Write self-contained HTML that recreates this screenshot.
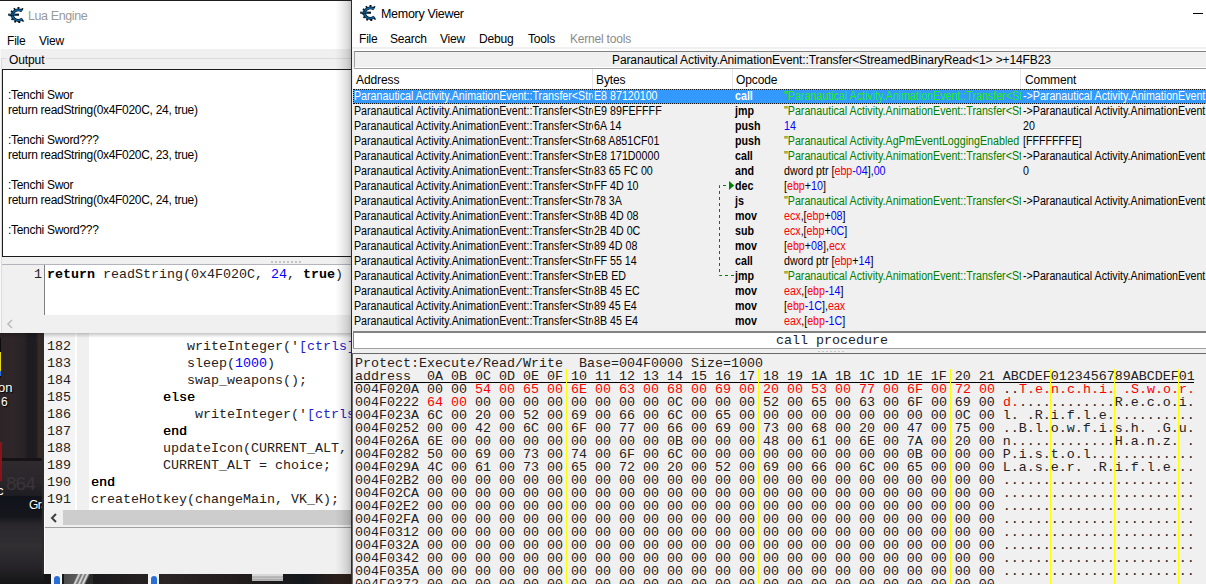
<!DOCTYPE html>
<html><head><meta charset="utf-8"><title>Memory Viewer</title>
<style>
*{box-sizing:border-box;margin:0;padding:0}
html,body{width:1206px;height:584px;overflow:hidden;background:#241d1e}
body{position:relative;font-family:"Liberation Sans",sans-serif;font-size:12px;color:#000}
.a{position:absolute}
.t{position:absolute;white-space:pre;line-height:15px}
.ui{font-family:"Liberation Sans",sans-serif;font-size:12px}
.mono{font-family:"Liberation Mono",monospace;font-size:13.333px;white-space:pre;position:absolute;line-height:13px}
.dis{position:absolute;white-space:pre;font-family:"Liberation Sans",sans-serif;font-size:12px;line-height:15px;height:15px;transform-origin:0 0;transform:scaleX(.89)}
.b{font-weight:bold}
.r{color:#f00}.bl{color:#00f}.g{color:#008000}
</style></head><body>
<div class="a" id="desk" style="left:0;top:330px;width:352px;height:254px;background:#1a191c;overflow:hidden">
<div class="a" style="left:0;top:0;width:44px;height:130px;background:linear-gradient(90deg,#2c2426 0,#2e2628 12px,#2a2325 24px,#1d1b20 28px,#1e1c20 36px,#3a2c28 39px,#2c2220 44px)"></div>
<div class="a" style="left:0;top:128px;width:44px;height:3px;background:#151316"></div>
<div class="a" style="left:0;top:131px;width:44px;height:35px;background:linear-gradient(180deg,#2e2a2e,#2a262a 60%,#1c1c22)"></div>
<div class="a" style="left:0;top:166px;width:44px;height:88px;background:linear-gradient(180deg,#10141a 0,#14161c 20px,#2a282c 30px,#322f33 50px,#262428 70px,#141416 88px)"></div>
<div class="a" style="left:0;top:8px;width:1px;height:40px;background:#0c0c0c"></div>
<div class="a" style="left:0;top:22px;width:1px;height:19px;background:#e6d61e"></div>
<div class="a" style="left:0;top:41px;width:1px;height:5px;background:#2a6fd8"></div>
<div class="a" style="left:0;top:112px;width:2px;height:39px;background:#8a1218"></div>
<div class="t" style="left:-2px;top:50px;color:#fff;font-size:13px;text-shadow:1px 1px 1px #000">on</div>
<div class="t" style="left:1px;top:65px;color:#fff;font-size:12px;text-shadow:1px 1px 1px #000">6</div>
<div class="t" style="left:6px;top:143px;color:#39353a;font-size:19px;line-height:22px;letter-spacing:-1px">864</div>
<div class="t" style="left:-3px;top:153px;color:#fff;font-size:13px">c</div>
<div class="t" style="left:29px;top:168px;color:#fff;font-size:12px;letter-spacing:-.5px;text-shadow:1px 1px 1px #000">Gra</div>
<div class="a" style="left:44px;top:244px;width:308px;height:10px;background:linear-gradient(90deg,#141416 0,#1c1a1c 60px,#2a2424 120px,#221c1c 200px,#14181c 260px,#2e201c 300px,#30221e 308px)"></div>
<div class="a" style="left:51px;top:244px;width:11px;height:10px;background:#f4f4f4"></div>
<div class="a" style="left:54px;top:246px;width:6px;height:8px;background:#2a6fd8;border-radius:3px 3px 0 0"></div>
<div class="a" style="left:64px;top:244px;width:29px;height:10px;background:linear-gradient(115deg,#4a4a4a 0,#585858 40%,#e0e0e0 45%,#6a6a6a 52%,#e0e0e0 58%,#707070 64%,#e8e8e8 70%,#2a2a2a 78%)"></div>
<div class="a" style="left:148px;top:244px;width:11px;height:10px;background:#f4f4f4"></div>
<div class="a" style="left:151px;top:246px;width:6px;height:8px;background:#2a6fd8;border-radius:3px 3px 0 0"></div>
<div class="a" style="left:252px;top:244px;width:31px;height:7px;background:linear-gradient(180deg,#d8d8d8 0,#d8d8d8 2px,#9a9a9a 3px,#d0d0d0 4px,#a0a0a0 6px,#c8c8c8 7px)"></div>
</div>
<div class="a" id="ed2" style="left:42px;top:330px;width:309px;height:244px;background:#fff;border-left:2px solid #2e2a2b">
<div class="a" style="left:0;top:0;width:31px;height:180px;background:#f4f4f4"></div>
<div class="a" style="left:33px;top:0;width:12px;height:180px;background:#f0f0f0"></div>
<div class="a" style="left:0;top:180px;width:310px;height:17px;background:#f0f0f0"></div>
<div class="a" style="left:19px;top:180px;width:291px;height:15px;background:#cdcdcd"></div>
<div class="a" style="left:0;top:197px;width:310px;height:1px;background:#a0a0a0"></div>
<div class="a" style="left:0;top:198px;width:310px;height:46px;background:#f0f0f0"></div>
<div class="a" style="left:0;top:180px;width:1px;height:64px;background:#fff"></div>
</div>
<div class="a" id="ed2t" style="left:44px;top:330px;width:307px;height:180px;overflow:hidden"><div class="mono" style="left:3px;top:10px;color:#222">182</div><div class="mono" style="left:143px;top:10px;color:#222">writeInteger('<span class="bl" style="color:#2222cc">[ctrls]</span></div><div class="mono" style="left:3px;top:27px;color:#222">183</div><div class="mono" style="left:143px;top:27px;color:#222">sleep(<span class="bl">1000</span>)</div><div class="mono" style="left:3px;top:44px;color:#222">184</div><div class="mono" style="left:143px;top:44px;color:#222">swap_weapons();</div><div class="mono" style="left:3px;top:61px;color:#222">185</div><div class="mono" style="left:119px;top:61px;color:#222"><span style="color:#000;text-shadow:.25px 0 0 #000">else</span></div><div class="mono" style="left:3px;top:78px;color:#222">186</div><div class="mono" style="left:151px;top:78px;color:#222">writeInteger('<span class="bl" style="color:#2222cc">[ctrls]</span></div><div class="mono" style="left:3px;top:95px;color:#222">187</div><div class="mono" style="left:119px;top:95px;color:#222"><span style="color:#000;text-shadow:.25px 0 0 #000">end</span></div><div class="mono" style="left:3px;top:112px;color:#222">188</div><div class="mono" style="left:119px;top:112px;color:#222">updateIcon(CURRENT_ALT, choice)</div><div class="mono" style="left:3px;top:129px;color:#222">189</div><div class="mono" style="left:119px;top:129px;color:#222">CURRENT_ALT = choice;</div><div class="mono" style="left:3px;top:146px;color:#222">190</div><div class="mono" style="left:47px;top:146px;color:#222"><span style="color:#000;text-shadow:.25px 0 0 #000">end</span></div><div class="mono" style="left:3px;top:163px;color:#222">191</div><div class="mono" style="left:47px;top:163px;color:#222">createHotkey(changeMain, VK_K);</div></div>
<svg class="a" style="left:50px;top:513px" width="8" height="10" viewBox="0 0 8 10"><path d="M6 1L2 5l4 4" fill="none" stroke="#404040" stroke-width="2"/></svg>
<div class="a" id="luashadow" style="left:0;top:326px;width:351px;height:12px;background:linear-gradient(180deg,rgba(0,0,0,.0) 0,rgba(0,0,0,.28) 6px,rgba(0,0,0,.12) 9px,rgba(0,0,0,0) 12px)"></div>
<div class="a" id="lua" style="left:0;top:0;width:351px;height:333px;background:#f0f0f0;overflow:hidden">
<div class="a" style="left:0;top:0;width:351px;height:49px;background:#fff"></div>
<div class="a" style="left:0;top:0;width:351px;height:1px;background:#1e1e1e"></div>
<div class="a" style="left:0;top:49px;width:1px;height:284px;background:#f8f8f8"></div>
<svg class="a" style="left:8px;top:7px" width="16" height="16" viewBox="0 0 16 16"><path d="M14.9 2.6A7.4 6.9 0 1 0 15.3 13.2" fill="none" stroke="#041624" stroke-width="2.4" stroke-dasharray="1.7 2.1"/><path d="M14 4.1A5.9 5.2 0 1 0 14.4 11.9" fill="none" stroke="#041a2c" stroke-width="3.1"/><path d="M14 4.1A5.9 5.2 0 1 0 14.4 11.9" fill="none" stroke="#0f66a2" stroke-width="1.4"/><path d="M0.2 7.7H11" stroke="#041624" stroke-width="2.1"/><path d="M1 7.7H7" stroke="#0f66a2" stroke-width=".9"/></svg><div class="t" style="left:28px;top:9px;color:#999;letter-spacing:-.4px;font-size:12.5px">Lua Engine</div>
<div class="t" style="left:7px;top:34px;letter-spacing:-.2px">File</div>
<div class="t" style="left:39px;top:34px;letter-spacing:-.2px">View</div>
<div class="a" style="left:1px;top:58px;width:350px;height:1px;background:#dcdcdc"></div>
<div class="a" style="left:1px;top:58px;width:1px;height:275px;background:#dcdcdc"></div>
<div class="t" style="left:7px;top:53px;background:#f0f0f0;padding:0 2px;letter-spacing:-.1px">Output</div>
<div class="a" id="outbox" style="left:2px;top:69px;width:352px;height:188px;background:#fff;border:1px solid #1c1c1c"></div>
<div class="t" style="left:8px;top:88px;letter-spacing:-.3px">:Tenchi Swor</div><div class="t" style="left:8px;top:103px;letter-spacing:-.3px">return readString(0x4F020C, 24, true)</div><div class="t" style="left:8px;top:133px;letter-spacing:-.3px">:Tenchi Sword???</div><div class="t" style="left:8px;top:148px;letter-spacing:-.3px">return readString(0x4F020C, 23, true)</div><div class="t" style="left:8px;top:178px;letter-spacing:-.3px">:Tenchi Swor</div><div class="t" style="left:8px;top:193px;letter-spacing:-.3px">return readString(0x4F020C, 24, true)</div><div class="t" style="left:8px;top:223px;letter-spacing:-.3px">:Tenchi Sword???</div><div class="a" style="left:271px;top:261px;width:30px;height:2px;background:repeating-linear-gradient(90deg,#c4c4c4 0,#c4c4c4 2px,transparent 2px,transparent 4px)"></div>
<div class="a" style="left:2px;top:264px;width:349px;height:1px;background:#b4b4bc"></div>
<div class="a" style="left:2px;top:265px;width:349px;height:50px;background:#fff"></div>
<div class="a" style="left:2px;top:265px;width:42px;height:50px;background:#f0f0f0"></div>
<div class="a" style="left:44px;top:265px;width:1px;height:50px;background:#808080"></div>
<div class="mono" style="left:34px;top:268px;color:#222">1</div>
<div class="mono" style="left:47px;top:268px;color:#222"><b style="color:#000">return</b> readString(0x4F020C, <span class="bl">24</span>, <b style="color:#000">true</b>)</div>
<svg class="a" style="left:6px;top:319px" width="8" height="10" viewBox="0 0 8 10"><path d="M6 1L2 5l4 4" fill="none" stroke="#bcbcbc" stroke-width="1.6"/></svg>
</div>
<div class="a" style="left:335px;top:1px;width:16px;height:583px;background:linear-gradient(90deg,rgba(0,0,0,0) 0,rgba(0,0,0,.05) 6px,rgba(0,0,0,.13) 12px,rgba(0,0,0,.22) 16px)"></div>
<div class="a" id="mv" style="left:351px;top:0;width:855px;height:584px;background:#f0f0f0;overflow:hidden">
<div class="a" style="left:0;top:0;width:855px;height:47px;background:#fff"></div>
<div class="a" style="left:0;top:0;width:1px;height:584px;background:#2b2b2b"></div>
<svg class="a" style="left:9px;top:5px" width="16" height="16" viewBox="0 0 16 16"><path d="M14.9 2.6A7.4 6.9 0 1 0 15.3 13.2" fill="none" stroke="#041624" stroke-width="2.4" stroke-dasharray="1.7 2.1"/><path d="M14 4.1A5.9 5.2 0 1 0 14.4 11.9" fill="none" stroke="#041a2c" stroke-width="3.1"/><path d="M14 4.1A5.9 5.2 0 1 0 14.4 11.9" fill="none" stroke="#0f66a2" stroke-width="1.4"/><path d="M0.2 7.7H11" stroke="#041624" stroke-width="2.1"/><path d="M1 7.7H7" stroke="#0f66a2" stroke-width=".9"/></svg><div class="t" style="left:30px;top:7px;font-size:12.5px;letter-spacing:-.3px">Memory Viewer</div>
<div class="a" style="left:842px;top:13px;width:10px;height:1px;background:#000"></div>
<div class="t" style="left:8px;top:32px;letter-spacing:-.2px">File</div>
<div class="t" style="left:39px;top:32px;letter-spacing:-.2px">Search</div>
<div class="t" style="left:89px;top:32px;letter-spacing:-.2px">View</div>
<div class="t" style="left:128px;top:32px;letter-spacing:-.2px">Debug</div>
<div class="t" style="left:177px;top:32px;letter-spacing:-.2px">Tools</div>
<div class="t" style="left:219px;top:32px;letter-spacing:-.2px;color:#8a8a8a">Kernel tools</div>
<div class="a" style="left:1px;top:49px;width:854px;height:2px;background:#fff"></div>
<div class="a" style="left:3px;top:51px;width:860px;height:17px;background:#f0f0f0;border:1px solid #a0a0a0;border-bottom-color:#fff;border-top-color:#828282"></div>
<div class="a" style="left:3px;top:68px;width:860px;height:1px;background:#a0a0a0"></div>
<div class="t" style="left:261px;top:53px;letter-spacing:-.1px">Paranautical Activity.AnimationEvent::Transfer&lt;StreamedBinaryRead&lt;1&gt; &gt;+14FB23</div>
<div class="a" style="left:2px;top:69px;width:853px;height:20px;background:#fff"></div>
<div class="a" style="left:241px;top:69px;width:1px;height:20px;background:#e5e5e5"></div>
<div class="a" style="left:381px;top:69px;width:1px;height:20px;background:#e5e5e5"></div>
<div class="a" style="left:669px;top:69px;width:1px;height:20px;background:#e5e5e5"></div>
<div class="t" style="left:5px;top:73px;letter-spacing:-.1px">Address</div>
<div class="t" style="left:245px;top:73px;letter-spacing:-.1px">Bytes</div>
<div class="t" style="left:385px;top:73px;letter-spacing:-.1px">Opcode</div>
<div class="t" style="left:674px;top:73px;letter-spacing:-.1px">Comment</div>
<div class="a" style="left:2px;top:89px;width:900px;height:15px;overflow:hidden;background:#3399ff;outline:1px solid #f09030;outline-offset:-1px"><div class="a" style="left:0;top:0;width:240px;height:15px;overflow:hidden"><div class="dis" style="left:1px;top:0;color:#fff;">Paranautical Activity.AnimationEvent::Transfer&lt;Stre</div></div><div class="dis" style="left:241px;top:0;color:#fff;">E8 87120100</div><div class="dis b" style="left:382px;top:0;color:#fff;">call</div><div class="a" style="left:430px;top:0;width:238px;height:15px;overflow:hidden"><div class="dis" style="left:1px;top:0;color:#fff;"><span style="color:#20f020">"Paranautical Activity.AnimationEvent::Transfer&lt;Stre</span></div></div><div class="dis" style="left:670px;top:0;color:#fff;">-&gt;Paranautical Activity.AnimationEvent::Transfer</div><div class="a" style="left:0;top:0;width:900px;height:15px;border:1px dotted #111"></div></div>
<div class="a" style="left:2px;top:104px;width:900px;height:15px;overflow:hidden;"><div class="a" style="left:0;top:0;width:240px;height:15px;overflow:hidden"><div class="dis" style="left:1px;top:0;">Paranautical Activity.AnimationEvent::Transfer&lt;Stre</div></div><div class="dis" style="left:241px;top:0;">E9 89FEFFFF</div><div class="dis b" style="left:382px;top:0;">jmp</div><div class="a" style="left:430px;top:0;width:238px;height:15px;overflow:hidden"><div class="dis" style="left:1px;top:0;"><span class="g">"Paranautical Activity.AnimationEvent::Transfer&lt;Stre</span></div></div><div class="dis" style="left:670px;top:0;">-&gt;Paranautical Activity.AnimationEvent::Transfer</div></div>
<div class="a" style="left:2px;top:119px;width:900px;height:15px;overflow:hidden;"><div class="a" style="left:0;top:0;width:240px;height:15px;overflow:hidden"><div class="dis" style="left:1px;top:0;">Paranautical Activity.AnimationEvent::Transfer&lt;Stre</div></div><div class="dis" style="left:241px;top:0;">6A 14</div><div class="dis b" style="left:382px;top:0;">push</div><div class="a" style="left:430px;top:0;width:238px;height:15px;overflow:hidden"><div class="dis" style="left:1px;top:0;"><span class="bl">14</span></div></div><div class="dis" style="left:670px;top:0;">20</div></div>
<div class="a" style="left:2px;top:134px;width:900px;height:15px;overflow:hidden;"><div class="a" style="left:0;top:0;width:240px;height:15px;overflow:hidden"><div class="dis" style="left:1px;top:0;">Paranautical Activity.AnimationEvent::Transfer&lt;Stre</div></div><div class="dis" style="left:241px;top:0;">68 A851CF01</div><div class="dis b" style="left:382px;top:0;">push</div><div class="a" style="left:430px;top:0;width:238px;height:15px;overflow:hidden"><div class="dis" style="left:1px;top:0;"><span class="g">"Paranautical Activity.AgPmEventLoggingEnabled</span></div></div><div class="dis" style="left:670px;top:0;">[FFFFFFFE]</div></div>
<div class="a" style="left:2px;top:149px;width:900px;height:15px;overflow:hidden;"><div class="a" style="left:0;top:0;width:240px;height:15px;overflow:hidden"><div class="dis" style="left:1px;top:0;">Paranautical Activity.AnimationEvent::Transfer&lt;Stre</div></div><div class="dis" style="left:241px;top:0;">E8 171D0000</div><div class="dis b" style="left:382px;top:0;">call</div><div class="a" style="left:430px;top:0;width:238px;height:15px;overflow:hidden"><div class="dis" style="left:1px;top:0;"><span class="g">"Paranautical Activity.AnimationEvent::Transfer&lt;Stre</span></div></div><div class="dis" style="left:670px;top:0;">-&gt;Paranautical Activity.AnimationEvent::Transfer</div></div>
<div class="a" style="left:2px;top:164px;width:900px;height:15px;overflow:hidden;"><div class="a" style="left:0;top:0;width:240px;height:15px;overflow:hidden"><div class="dis" style="left:1px;top:0;">Paranautical Activity.AnimationEvent::Transfer&lt;Stre</div></div><div class="dis" style="left:241px;top:0;">83 65 FC 00</div><div class="dis b" style="left:382px;top:0;">and</div><div class="a" style="left:430px;top:0;width:238px;height:15px;overflow:hidden"><div class="dis" style="left:1px;top:0;">dword ptr [<span class="r">ebp</span><span class="bl">-04</span>],<span class="bl">00</span></div></div><div class="dis" style="left:670px;top:0;">0</div></div>
<div class="a" style="left:2px;top:179px;width:900px;height:15px;overflow:hidden;"><div class="a" style="left:0;top:0;width:240px;height:15px;overflow:hidden"><div class="dis" style="left:1px;top:0;">Paranautical Activity.AnimationEvent::Transfer&lt;Stre</div></div><div class="dis" style="left:241px;top:0;">FF 4D 10</div><div class="dis b" style="left:382px;top:0;">dec</div><div class="a" style="left:430px;top:0;width:238px;height:15px;overflow:hidden"><div class="dis" style="left:1px;top:0;">[<span class="r">ebp</span>+<span class="bl">10</span>]</div></div></div>
<div class="a" style="left:2px;top:194px;width:900px;height:15px;overflow:hidden;"><div class="a" style="left:0;top:0;width:240px;height:15px;overflow:hidden"><div class="dis" style="left:1px;top:0;">Paranautical Activity.AnimationEvent::Transfer&lt;Stre</div></div><div class="dis" style="left:241px;top:0;">78 3A</div><div class="dis b" style="left:382px;top:0;">js</div><div class="a" style="left:430px;top:0;width:238px;height:15px;overflow:hidden"><div class="dis" style="left:1px;top:0;"><span class="g">"Paranautical Activity.AnimationEvent::Transfer&lt;Stre</span></div></div><div class="dis" style="left:670px;top:0;">-&gt;Paranautical Activity.AnimationEvent::Transfer</div></div>
<div class="a" style="left:2px;top:209px;width:900px;height:15px;overflow:hidden;"><div class="a" style="left:0;top:0;width:240px;height:15px;overflow:hidden"><div class="dis" style="left:1px;top:0;">Paranautical Activity.AnimationEvent::Transfer&lt;Stre</div></div><div class="dis" style="left:241px;top:0;">8B 4D 08</div><div class="dis b" style="left:382px;top:0;">mov</div><div class="a" style="left:430px;top:0;width:238px;height:15px;overflow:hidden"><div class="dis" style="left:1px;top:0;"><span class="r">ecx</span>,[<span class="r">ebp</span>+<span class="bl">08</span>]</div></div></div>
<div class="a" style="left:2px;top:224px;width:900px;height:15px;overflow:hidden;"><div class="a" style="left:0;top:0;width:240px;height:15px;overflow:hidden"><div class="dis" style="left:1px;top:0;">Paranautical Activity.AnimationEvent::Transfer&lt;Stre</div></div><div class="dis" style="left:241px;top:0;">2B 4D 0C</div><div class="dis b" style="left:382px;top:0;">sub</div><div class="a" style="left:430px;top:0;width:238px;height:15px;overflow:hidden"><div class="dis" style="left:1px;top:0;"><span class="r">ecx</span>,[<span class="r">ebp</span>+<span class="bl">0C</span>]</div></div></div>
<div class="a" style="left:2px;top:239px;width:900px;height:15px;overflow:hidden;"><div class="a" style="left:0;top:0;width:240px;height:15px;overflow:hidden"><div class="dis" style="left:1px;top:0;">Paranautical Activity.AnimationEvent::Transfer&lt;Stre</div></div><div class="dis" style="left:241px;top:0;">89 4D 08</div><div class="dis b" style="left:382px;top:0;">mov</div><div class="a" style="left:430px;top:0;width:238px;height:15px;overflow:hidden"><div class="dis" style="left:1px;top:0;">[<span class="r">ebp</span>+<span class="bl">08</span>],<span class="r">ecx</span></div></div></div>
<div class="a" style="left:2px;top:254px;width:900px;height:15px;overflow:hidden;"><div class="a" style="left:0;top:0;width:240px;height:15px;overflow:hidden"><div class="dis" style="left:1px;top:0;">Paranautical Activity.AnimationEvent::Transfer&lt;Stre</div></div><div class="dis" style="left:241px;top:0;">FF 55 14</div><div class="dis b" style="left:382px;top:0;">call</div><div class="a" style="left:430px;top:0;width:238px;height:15px;overflow:hidden"><div class="dis" style="left:1px;top:0;">dword ptr [<span class="r">ebp</span>+<span class="bl">14</span>]</div></div></div>
<div class="a" style="left:2px;top:269px;width:900px;height:15px;overflow:hidden;"><div class="a" style="left:0;top:0;width:240px;height:15px;overflow:hidden"><div class="dis" style="left:1px;top:0;">Paranautical Activity.AnimationEvent::Transfer&lt;Stre</div></div><div class="dis" style="left:241px;top:0;">EB ED</div><div class="dis b" style="left:382px;top:0;">jmp</div><div class="a" style="left:430px;top:0;width:238px;height:15px;overflow:hidden"><div class="dis" style="left:1px;top:0;"><span class="g">"Paranautical Activity.AnimationEvent::Transfer&lt;Stre</span></div></div><div class="dis" style="left:670px;top:0;">-&gt;Paranautical Activity.AnimationEvent::Transfer</div></div>
<div class="a" style="left:2px;top:284px;width:900px;height:15px;overflow:hidden;"><div class="a" style="left:0;top:0;width:240px;height:15px;overflow:hidden"><div class="dis" style="left:1px;top:0;">Paranautical Activity.AnimationEvent::Transfer&lt;Stre</div></div><div class="dis" style="left:241px;top:0;">8B 45 EC</div><div class="dis b" style="left:382px;top:0;">mov</div><div class="a" style="left:430px;top:0;width:238px;height:15px;overflow:hidden"><div class="dis" style="left:1px;top:0;"><span class="r">eax</span>,[<span class="r">ebp</span><span class="bl">-14</span>]</div></div></div>
<div class="a" style="left:2px;top:299px;width:900px;height:15px;overflow:hidden;"><div class="a" style="left:0;top:0;width:240px;height:15px;overflow:hidden"><div class="dis" style="left:1px;top:0;">Paranautical Activity.AnimationEvent::Transfer&lt;Stre</div></div><div class="dis" style="left:241px;top:0;">89 45 E4</div><div class="dis b" style="left:382px;top:0;">mov</div><div class="a" style="left:430px;top:0;width:238px;height:15px;overflow:hidden"><div class="dis" style="left:1px;top:0;">[<span class="r">ebp</span><span class="bl">-1C</span>],<span class="r">eax</span></div></div></div>
<div class="a" style="left:2px;top:314px;width:900px;height:15px;overflow:hidden;"><div class="a" style="left:0;top:0;width:240px;height:15px;overflow:hidden"><div class="dis" style="left:1px;top:0;">Paranautical Activity.AnimationEvent::Transfer&lt;Stre</div></div><div class="dis" style="left:241px;top:0;">8B 45 E4</div><div class="dis b" style="left:382px;top:0;">mov</div><div class="a" style="left:430px;top:0;width:238px;height:15px;overflow:hidden"><div class="dis" style="left:1px;top:0;"><span class="r">eax</span>,[<span class="r">ebp</span><span class="bl">-1C</span>]</div></div></div>
<svg class="a" style="left:360px;top:170px" width="30" height="120" viewBox="0 0 30 120"><path d="M23 105.5H8.5V15.5H16" fill="none" stroke="#008000" stroke-width="1" stroke-dasharray="3 3"/><path d="M18 11l5.2 4.5-5.2 4.5z" fill="#008000"/></svg>
<div class="a" style="left:2px;top:329px;width:853px;height:2px;background:#f0f0f0"></div>
<div class="a" style="left:2px;top:331px;width:853px;height:2px;background:#828282"></div>
<div class="a" style="left:3px;top:333px;width:852px;height:15px;background:#fff"></div>
<div class="a" style="left:2px;top:333px;width:1px;height:15px;background:#828282"></div>
<div class="mono" style="left:425px;top:334px;color:#222">call procedure</div>
<div class="a" style="left:2px;top:348px;width:853px;height:1px;background:#a0a0a0"></div>
<div class="a" style="left:467px;top:351px;width:28px;height:1px;background:repeating-linear-gradient(90deg,#c8c8c8 0,#c8c8c8 2px,transparent 2px,transparent 4px)"></div>
<div class="a" style="left:1px;top:353px;width:854px;height:1px;background:#696969"></div>
<div class="a" style="left:1px;top:353px;width:1px;height:231px;background:#696969"></div>
<div class="mono" style="left:4px;top:357px;color:#222">Protect:Execute/Read/Write  Base=004F0000 Size=1000</div>
<div class="mono" style="left:4px;top:370px;color:#222">address  0A 0B 0C 0D 0E 0F 10 11 12 13 14 15 16 17 18 19 1A 1B 1C 1D 1E 1F 20 21 ABCDEF0123456789ABCDEF01</div>
<div class="a" style="left:3px;top:382px;width:840px;height:1px;background:#000"></div>
<div class="mono" style="left:4px;top:383px;color:#222">004F020A 00 00 <span class="r">54</span> <span class="r">00</span> <span class="r">65</span> <span class="r">00</span> <span class="r">6E</span> <span class="r">00</span> <span class="r">63</span> <span class="r">00</span> <span class="r">68</span> <span class="r">00</span> <span class="r">69</span> <span class="r">00</span> <span class="r">20</span> <span class="r">00</span> <span class="r">53</span> <span class="r">00</span> <span class="r">77</span> <span class="r">00</span> <span class="r">6F</span> <span class="r">00</span> <span class="r">72</span> <span class="r">00</span> ..<span class="r">T</span><span class="r">.</span><span class="r">e</span><span class="r">.</span><span class="r">n</span><span class="r">.</span><span class="r">c</span><span class="r">.</span><span class="r">h</span><span class="r">.</span><span class="r">i</span><span class="r">.</span><span class="r"> </span><span class="r">.</span><span class="r">S</span><span class="r">.</span><span class="r">w</span><span class="r">.</span><span class="r">o</span><span class="r">.</span><span class="r">r</span><span class="r">.</span></div>
<div class="mono" style="left:4px;top:396px;color:#222">004F0222 <span class="r">64</span> <span class="r">00</span> 00 00 00 00 00 00 00 00 0C 00 00 00 52 00 65 00 63 00 6F 00 69 00 <span class="r">d</span><span class="r">.</span>............R.e.c.o.i.</div>
<div class="mono" style="left:4px;top:409px;color:#222">004F023A 6C 00 20 00 52 00 69 00 66 00 6C 00 65 00 00 00 00 00 00 00 00 00 0C 00 l. .R.i.f.l.e...........</div>
<div class="mono" style="left:4px;top:422px;color:#222">004F0252 00 00 42 00 6C 00 6F 00 77 00 66 00 69 00 73 00 68 00 20 00 47 00 75 00 ..B.l.o.w.f.i.s.h. .G.u.</div>
<div class="mono" style="left:4px;top:435px;color:#222">004F026A 6E 00 00 00 00 00 00 00 00 00 0B 00 00 00 48 00 61 00 6E 00 7A 00 20 00 n.............H.a.n.z. .</div>
<div class="mono" style="left:4px;top:448px;color:#222">004F0282 50 00 69 00 73 00 74 00 6F 00 6C 00 00 00 00 00 00 00 00 00 0B 00 00 00 P.i.s.t.o.l.............</div>
<div class="mono" style="left:4px;top:461px;color:#222">004F029A 4C 00 61 00 73 00 65 00 72 00 20 00 52 00 69 00 66 00 6C 00 65 00 00 00 L.a.s.e.r. .R.i.f.l.e...</div>
<div class="mono" style="left:4px;top:474px;color:#222">004F02B2 00 00 00 00 00 00 00 00 00 00 00 00 00 00 00 00 00 00 00 00 00 00 00 00 ........................</div>
<div class="mono" style="left:4px;top:487px;color:#222">004F02CA 00 00 00 00 00 00 00 00 00 00 00 00 00 00 00 00 00 00 00 00 00 00 00 00 ........................</div>
<div class="mono" style="left:4px;top:500px;color:#222">004F02E2 00 00 00 00 00 00 00 00 00 00 00 00 00 00 00 00 00 00 00 00 00 00 00 00 ........................</div>
<div class="mono" style="left:4px;top:513px;color:#222">004F02FA 00 00 00 00 00 00 00 00 00 00 00 00 00 00 00 00 00 00 00 00 00 00 00 00 ........................</div>
<div class="mono" style="left:4px;top:526px;color:#222">004F0312 00 00 00 00 00 00 00 00 00 00 00 00 00 00 00 00 00 00 00 00 00 00 00 00 ........................</div>
<div class="mono" style="left:4px;top:539px;color:#222">004F032A 00 00 00 00 00 00 00 00 00 00 00 00 00 00 00 00 00 00 00 00 00 00 00 00 ........................</div>
<div class="mono" style="left:4px;top:552px;color:#222">004F0342 00 00 00 00 00 00 00 00 00 00 00 00 00 00 00 00 00 00 00 00 00 00 00 00 ........................</div>
<div class="mono" style="left:4px;top:565px;color:#222">004F035A 00 00 00 00 00 00 00 00 00 00 00 00 00 00 00 00 00 00 00 00 00 00 00 00 ........................</div>
<div class="mono" style="left:4px;top:578px;color:#222">004F0372 00 00 00 00 00 00 00 00 00 00 00 00 00 00 00 00 00 00 00 00 00 00 00 00 ........................</div>
<div class="a" style="left:215px;top:369px;width:1px;height:215px;background:#ffff00"></div><div class="a" style="left:407px;top:369px;width:1px;height:215px;background:#ffff00"></div><div class="a" style="left:599px;top:369px;width:1px;height:215px;background:#ffff00"></div><div class="a" style="left:699px;top:369px;width:1px;height:215px;background:#ffff00"></div><div class="a" style="left:763px;top:369px;width:1px;height:215px;background:#ffff00"></div><div class="a" style="left:827px;top:369px;width:1px;height:215px;background:#ffff00"></div>
</div>
</body></html>
